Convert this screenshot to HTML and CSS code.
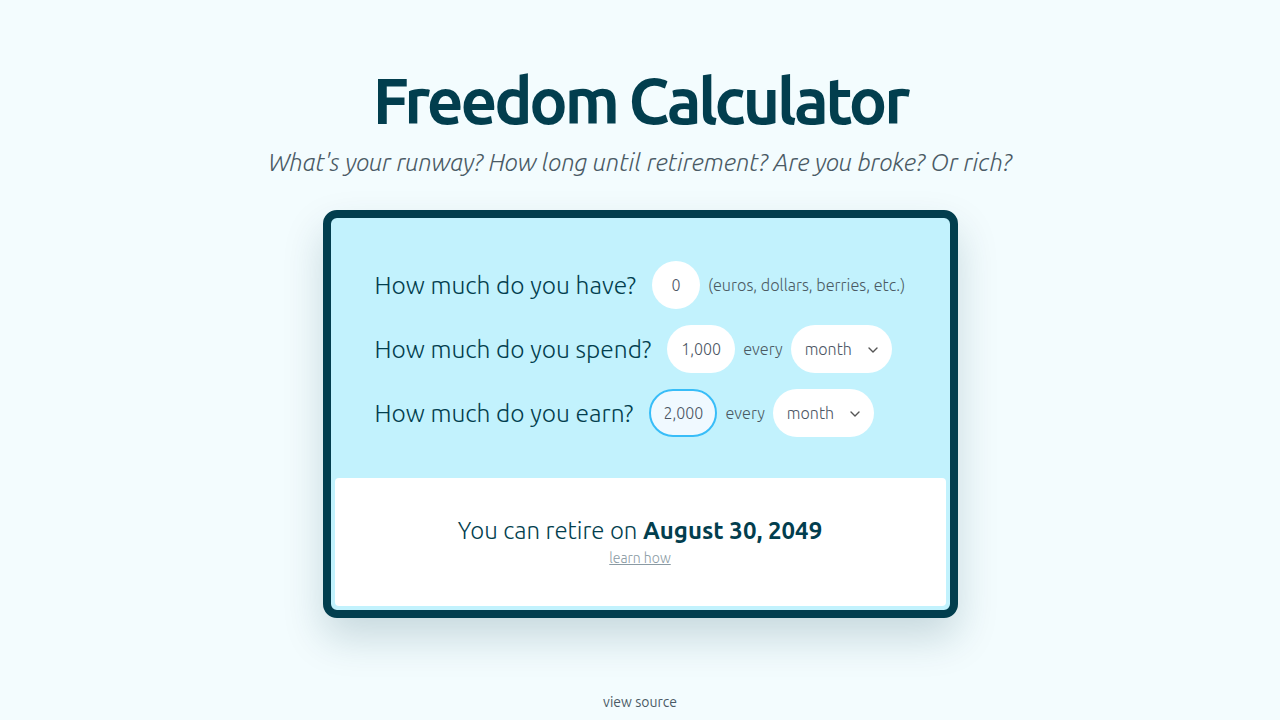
FILE: index.html
```html
<!DOCTYPE html>
<html>
<head>
<meta charset="utf-8">
<link rel="stylesheet" href="styles.css">
</head>
<body>
<main class="page">
  <h1 class="title">Freedom Calculator</h1>
  <p class="subtitle">What's your runway? How long until retirement? Are you broke? Or rich?</p>
  <section class="card">
    <div class="form">
      <div class="row">
        <span class="label">How much do you have?</span>
        <span class="input input-have">0</span>
        <span class="note">(euros, dollars, berries, etc.)</span>
      </div>
      <div class="row">
        <span class="label">How much do you spend?</span>
        <span class="input input-num">1,000</span>
        <span class="note">every</span>
        <span class="select">month
          <svg class="chev" viewBox="0 0 10 6" width="10" height="6"><path d="M1 1l4 4 4-4" fill="none" stroke="#555" stroke-width="1.4" stroke-linecap="round" stroke-linejoin="round"/></svg>
        </span>
      </div>
      <div class="row">
        <span class="label">How much do you earn?</span>
        <span class="input input-num focused">2,000</span>
        <span class="note">every</span>
        <span class="select">month
          <svg class="chev" viewBox="0 0 10 6" width="10" height="6"><path d="M1 1l4 4 4-4" fill="none" stroke="#555" stroke-width="1.4" stroke-linecap="round" stroke-linejoin="round"/></svg>
        </span>
      </div>
    </div>
    <div class="result">
      <p class="result-text">You can retire on <strong>August 30, 2049</strong></p>
      <a class="learn" href="#">learn how</a>
    </div>
  </section>
  <footer class="footer"><a href="#" class="source">view source</a></footer>
</main>
</body>
</html>
```

FILE: styles.css
```css
* { box-sizing: border-box; }
html, body { margin: 0; padding: 0; }
body {
  background: #f3fcfe;
  font-family: "Ubuntu", "Lato", "Open Sans", sans-serif;
  color: #023e4e;
}
.page {
  width: 1280px;
  height: 720px;
  display: flex;
  flex-direction: column;
  align-items: center;
  padding-top: 64px;
}
.title {
  margin: 0;
  font-size: 64px;
  line-height: 72px;
  font-weight: 700;
  color: #023e4e;
  letter-spacing: -0.05em;
}
.subtitle {
  margin: 10px 0 0;
  font-size: 24.25px;
  line-height: 32px;
  font-style: italic;
  font-weight: 300;
  color: #4a5a65;
}
.card {
  margin-top: 32px;
  width: 635px;
  height: 408px;
  border: 8px solid #023e4e;
  border-radius: 14px;
  background: #c2f2fd;
  box-shadow: 0 20px 40px rgba(2, 62, 78, 0.18);
  display: flex;
  flex-direction: column;
  padding: 0 4px 4px;
}
.form {
  display: flex;
  flex-direction: column;
  gap: 16px;
  padding: 43px 40px 0;
  height: 260px;
}
.row {
  display: flex;
  align-items: center;
  gap: 8px;
  height: 48px;
}
.label {
  font-size: 24.6px;
  font-weight: 300;
  color: #023e4e;
  margin-right: 8px;
}
.input {
  height: 48px;
  border-radius: 24px;
  background: #fff;
  display: flex;
  align-items: center;
  justify-content: center;
  font-size: 16px;
  font-weight: 300;
  color: #4b5563;
}
.input-have { width: 48px; }
.input-num { width: 68px; }
.focused {
  border: 2px solid #38bdf8;
  background: #f0f9ff;
}
.note {
  font-size: 16.2px;
  font-weight: 300;
  color: #4b5a63;
}
.select {
  height: 48px;
  width: 101px;
  border-radius: 24px;
  background: #fff;
  display: flex;
  align-items: center;
  justify-content: space-between;
  padding: 0 14px 0 14px;
  font-size: 16px;
  font-weight: 300;
  color: #4b5563;
}
.chev { margin-top: 1px; }
.result {
  flex: 1;
  background: #fff;
  border-radius: 4px;
  display: flex;
  flex-direction: column;
  align-items: center;
  justify-content: center;
  padding-bottom: 2px;
}
.result-text {
  margin: 0;
  font-size: 24px;
  line-height: 32px;
  font-weight: 300;
  color: #023e4e;
}
.result-text strong { font-weight: 700; }
.learn {
  margin-top: 2px;
  font-size: 14px;
  line-height: 18px;
  font-weight: 300;
  color: #8a9aa3;
  text-decoration: underline;
}
.footer {
  margin-top: auto;
  padding-bottom: 10px;
}
.source {
  font-size: 14px;
  color: #4a5a65;
  text-decoration: none;
}
```
